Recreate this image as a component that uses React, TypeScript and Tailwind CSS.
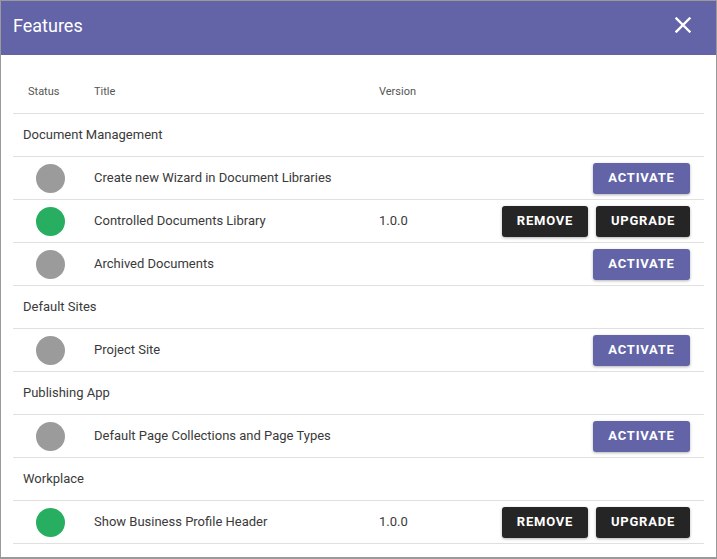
import React from "react";

type Row =
  | { kind: "group"; title: string }
  | { kind: "item"; title: string; active: boolean; version?: string };

const rows: Row[] = [
  { kind: "group", title: "Document Management" },
  { kind: "item", title: "Create new Wizard in Document Libraries", active: false },
  { kind: "item", title: "Controlled Documents Library", active: true, version: "1.0.0" },
  { kind: "item", title: "Archived Documents", active: false },
  { kind: "group", title: "Default Sites" },
  { kind: "item", title: "Project Site", active: false },
  { kind: "group", title: "Publishing App" },
  { kind: "item", title: "Default Page Collections and Page Types", active: false },
  { kind: "group", title: "Workplace" },
  { kind: "item", title: "Show Business Profile Header", active: true, version: "1.0.0" },
];

function Btn({ label, dark, w }: { label: string; dark?: boolean; w: string }) {
  return (
    <button
      className={
        "h-[31px] rounded-[3px] text-white text-[13px] font-bold tracking-[0.06em] flex items-center justify-center shadow-[0_1px_3px_rgba(0,0,0,0.3)] " +
        (dark ? "bg-[#252525] " : "bg-[#6264a7] ") +
        w
      }
    >
      {label}
    </button>
  );
}

export default function App() {
  return (
    <div
      className="w-[717px] h-[559px] border border-b-2 border-[#9a9a9a] bg-white flex flex-col text-[#3a3a3a]"
      style={{ fontFamily: "Roboto, 'Liberation Sans', sans-serif" }}
    >
      <div className="h-[54px] bg-[#6264a7] flex items-center justify-between pl-[12px] pr-[25px] pb-[6px] shrink-0">
        <span className="text-white text-[18px]">Features</span>
        <svg width="16" height="16" viewBox="0 0 16 16">
          <path d="M1.5 1.5 L14.5 14.5 M14.5 1.5 L1.5 14.5" stroke="white" strokeWidth="2.4" strokeLinecap="square" />
        </svg>
      </div>
      <div className="pl-[12px] pr-[12px] pt-[16px]">
        <div className="h-[43px] flex items-center border-b border-[#e0e0e0] text-[11px] text-[#555]">
          <div className="w-[81px] pl-[15px]">Status</div>
          <div className="w-[285px]">Title</div>
          <div>Version</div>
        </div>
        {rows.map((r, i) =>
          r.kind === "group" ? (
            <div key={i} className="h-[43px] flex items-center border-b border-[#e0e0e0] pl-[10px] text-[13px]">
              {r.title}
            </div>
          ) : (
            <div key={i} className="h-[43px] flex items-center border-b border-[#e0e0e0] text-[13px]">
              <div className="w-[81px] pl-[23px]">
                <div className={"w-[29px] h-[29px] rounded-full " + (r.active ? "bg-[#27ae60]" : "bg-[#9b9b9b]")} />
              </div>
              <div className="w-[285px]">{r.title}</div>
              <div className="w-[60px]">{r.version ?? ""}</div>
              <div className="ml-auto pr-[14px] flex gap-[8px]">
                {r.active ? (
                  <>
                    <Btn label="REMOVE" dark w="w-[86px]" />
                    <Btn label="UPGRADE" dark w="w-[94px]" />
                  </>
                ) : (
                  <Btn label="ACTIVATE" w="w-[97px]" />
                )}
              </div>
            </div>
          )
        )}
      </div>
    </div>
  );
}
